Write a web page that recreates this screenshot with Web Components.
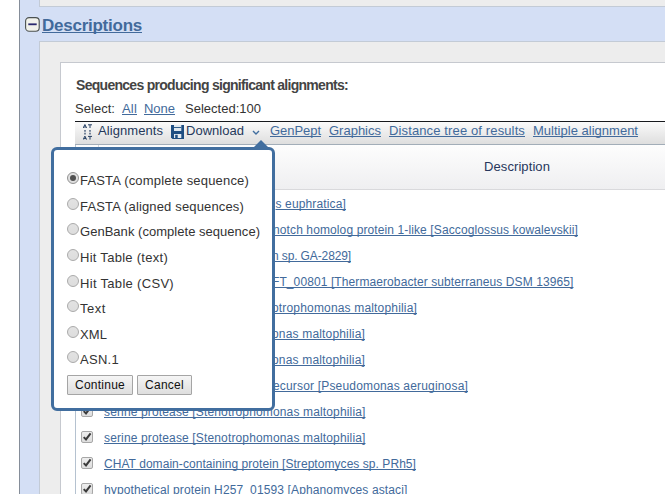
<!DOCTYPE html>
<html lang="en"><head><meta charset="utf-8"><title>Descriptions</title>
<style>
html,body{margin:0;height:100%;overflow:hidden;background:#fff;font-family:"Liberation Sans",Arial,sans-serif;font-size:13px;color:#333}
</style></head><body>
<blast-page></blast-page>
<script>
const define=(name,css,html,ready)=>customElements.define(name,class extends HTMLElement{
  connectedCallback(){
    if(this.shadowRoot)return;
    this.attachShadow({mode:'open'}).innerHTML=`<style>*{box-sizing:border-box}${css}</style>${html}`;
    if(ready)ready(this,this.shadowRoot);
  }
});

/* A run of text spaced out to the width given in its w attribute. */
define('fit-text',`:host{display:inline-block;white-space:pre}`,`<span><slot></slot></span>`,(el,root)=>{
  const s=root.querySelector('span'),w=+el.getAttribute('w'),n=el.textContent.length;
  s.style.letterSpacing='0px';
  const natural=s.getBoundingClientRect().width;
  s.style.letterSpacing=(w-natural)/n+'px';
});
define('text-link',`:host{display:inline-block;color:#426a9b}
a{color:inherit;text-decoration:underline;text-decoration-skip-ink:none;text-decoration-thickness:1px;text-underline-offset:1px;white-space:pre}`,
`<a><slot></slot></a>`,(el,root)=>{
  const s=root.querySelector('a'),w=+el.getAttribute('w'),n=el.textContent.length;
  s.style.letterSpacing=(w-s.getBoundingClientRect().width)/n+'px';
});
define('toggle-icon',`:host{display:block;width:15px;height:15px}svg{display:block}`,
`<svg width="15" height="15"><rect x=".6" y=".6" width="13.6" height="13.6" rx="3.5" fill="#f1f2ec" stroke="#4b5150" stroke-width="1.1"/><path d="M3.3 7.3h8.4" stroke="#29276f" stroke-width="1.8"/></svg>`);
define('align-icon',`:host{display:block;width:11px;height:16px}svg{display:block}`,
`<svg width="11" height="16" fill="none" stroke="#253f63"><path d="M.2 4L1.9 .5L3.6 4M.9 3H3M5 .8H9M7 .8V4M.2 15.6L1.9 12.1L3.6 15.6M.9 14.6H3M5 12.4H9M7 12.4V15.6"/><path d="M2 6v1.7M7 6v1.7M2 8.8v1.7M7 8.8v1.7" stroke-width="1.2"/></svg>`);
define('save-icon',`:host{display:block;width:13px;height:14px}svg{display:block}`,
`<svg width="13" height="14"><path d="M0 0H13V14H1.5L0 12.5Z" fill="#1e4e82"/><path d="M3 0H10.3V6H3Z" fill="#dfe8ef"/><path d="M3 2.5H10.3" stroke="#315d8b"/><path d="M3 9H10.3V13H3Z" fill="#e4ebf1"/><path d="M4.2 9.8h2.5V13H4.2Z" fill="#1e4e82"/></svg>`);
define('radio-dot',`:host{flex:none;width:12px;height:12px;border-radius:50%;border:1px solid #aaa;background:linear-gradient(#e2e2e2,#ddd);display:flex;align-items:center;justify-content:center;box-sizing:border-box}
:host([on]){border-color:#929292}
i{display:none;width:6px;height:6px;border-radius:50%;background:#505050}:host([on]) i{display:block}`,`<i></i>`);
define('check-mark',`:host{display:block;width:12px;height:12px;border:1px solid #a7a7a7;border-radius:2px;background:linear-gradient(#eee,#ddd);box-sizing:border-box}svg{display:block;overflow:visible}`,
`<svg width="10" height="10"><path d="M1.7 5.1L4 7.4L8.6 1.3" fill="none" stroke="#3b3b3b" stroke-width="2"/></svg>`);
define('form-button',`:host{display:block}button{display:flex;align-items:center;justify-content:center;width:100%;height:20px;padding:0;border:1px solid #a5a5a5;border-radius:1px;background:linear-gradient(#f5f5f5,#dedede);font:12px "Liberation Sans",Arial,sans-serif;color:#111}`,`<button><slot></slot></button>`);
define('radio-option',`:host{display:flex;height:25.6px;align-items:center;gap:1px}radio-dot{margin-top:-5px}`,
`<radio-dot></radio-dot><slot></slot>`,(el,root)=>{if(el.hasAttribute('on'))root.querySelector('radio-dot').setAttribute('on','')});
define('result-row',`:host{display:flex;height:26px;align-items:center;font-size:12px;padding-left:5px}
check-mark{margin:-2px 11px 0 0;flex:none}.t{padding-left:var(--lead,0px)}`,
`<check-mark></check-mark><div class="t"><slot></slot></div>`);
define('download-menu',`:host{display:block;width:224px;height:264px;border:3px solid #416e9f;border-radius:6px;background:#fff;padding:18px 13px 0;box-sizing:border-box}
.arrow{position:absolute;left:199px;top:-10px;width:16px;height:8px;background:#416e9f;clip-path:polygon(50% 0,100% 100%,0 100%)}
.buttons{display:flex;gap:4px;margin-top:2px}`,
`<div class="arrow"></div>
<radio-option on><fit-text w="169">FASTA (complete sequence)</fit-text></radio-option>
<radio-option><fit-text w="164">FASTA (aligned sequences)</fit-text></radio-option>
<radio-option><fit-text w="180">GenBank (complete sequence)</fit-text></radio-option>
<radio-option><fit-text w="88">Hit Table (text)</fit-text></radio-option>
<radio-option><fit-text w="94">Hit Table (CSV)</fit-text></radio-option>
<radio-option><fit-text w="26">Text</fit-text></radio-option>
<radio-option><fit-text w="27">XML</fit-text></radio-option>
<radio-option><fit-text w="39">ASN.1</fit-text></radio-option>
<div class="buttons"><form-button style="width:66px"><fit-text w="50">Continue</fit-text></form-button><form-button style="width:55px"><fit-text w="39">Cancel</fit-text></form-button></div>`);
define('tool-bar',`:host{display:flex;height:24px;border-top:1px solid #17191d;border-bottom:1px solid #a2adb8;background:linear-gradient(#fafafa,#dedede);padding:0 0 5px 8px;align-items:center;color:#25395b;box-sizing:border-box}
align-icon{margin:3px 4px 0 0}save-icon{margin:2px 2px 0 8px}.chev{margin:3px 10px 0 8px}text-link{margin-right:8px}`,
`<align-icon></align-icon><fit-text w="65">Alignments</fit-text><save-icon></save-icon><fit-text w="58">Download</fit-text>
<svg class="chev" width="8" height="5"><path d="M1 1L4 4L7 1" fill="none" stroke="#416e9f" stroke-width="1.4"/></svg>
<text-link w="51">GenPept</text-link><text-link w="52">Graphics</text-link><text-link w="136">Distance tree of results</text-link><text-link w="105">Multiple alignment</text-link>`);
define('result-table',`:host{display:block;border-left:1px solid #b5c2d0}
.head{display:flex;height:45px;border-bottom:1px solid #d9d9dc;background:linear-gradient(#fdfdfd,#efeff1);color:#27375c;line-height:16px}
.pick{width:23px;border-right:1px solid #d3d8df}.name{padding:14px 0 0 385px}.name fit-text{display:block}.rows{padding-top:1px}`,
`<div class="head"><div class="pick"></div><div class="name"><fit-text w="66">Description</fit-text></div></div><div class="rows"></div>`,(el,root)=>{
  /* Each row: lead before the text, width of the text, text. */
  const rows=[
    [171.5,70.5,'s euphratica]'],[169,305,'notch homolog protein 1-like [Saccoglossus kowalevskii]'],
    [168,79,'n sp. GA-2829]'],[168,301.5,'FT_00801 [Thermaerobacter subterraneus DSM 13965]'],
    [168,145,'otrophomonas maltophilia]'],[168,93,'onas maltophilia]'],[168,93,'onas maltophilia]'],
    [169,195,'ecursor [Pseudomonas aeruginosa]'],
    [0,261.5,'serine protease [Stenotrophomonas maltophilia]'],[0,261.5,'serine protease [Stenotrophomonas maltophilia]'],
    [0,312,'CHAT domain-containing protein [Streptomyces sp. PRh5]'],[0,303.5,'hypothetical protein H257_01593 [Aphanomyces astaci]']];
  root.querySelector('.rows').innerHTML=rows.map(([x,w,t])=>`<result-row style="--lead:${x}px"><text-link w="${w}">${t}</text-link></result-row>`).join('');
});
define('blast-page',`:host{display:block;height:494px;overflow:hidden;position:relative}
.section{margin-left:19px;height:494px;border-left:1px solid #858d99;background:#d4dff5;padding-left:19px}
.above{height:7px;background:#ededed;border-left:1px solid #c3cbd6;border-bottom:1px solid #c3cbd6}
.heading{display:flex;height:34px;margin-left:-14px;align-items:center;gap:2px}
.heading text-link{font-size:17px;font-weight:bold;margin-top:3px}
.heading toggle-icon{margin-top:1px}
.panel{height:453px;background:#ededed;border:1px solid #c3cbd6;border-width:1px 0 0 1px;padding:20px 0 0 20px}
.card{height:432px;background:#fff;border:1px solid #c6c9cf;border-width:1px 0 0 1px;padding:14px 0 0 14px}
.title{font-size:14px;font-weight:bold;line-height:16px;height:24px;color:#444;padding-left:1px}
.select{display:flex;height:20px;line-height:16px}
.select>:first-child+*{margin:0 7px}
download-menu{position:absolute;left:51px;top:147px}`,
`<div class="section"><div class="above"></div>
<div class="heading"><toggle-icon></toggle-icon><text-link w="100">Descriptions</text-link></div>
<div class="panel"><div class="card">
<div class="title"><fit-text w="272">Sequences producing significant alignments:</fit-text></div>
<div class="select"><fit-text w="40">Select:</fit-text><text-link w="15">All</text-link><text-link w="31" style="margin-right:10px">None</text-link><fit-text w="76">Selected:100</fit-text></div>
<tool-bar></tool-bar><result-table></result-table>
</div></div></div><download-menu></download-menu>`);
</script></body></html>
